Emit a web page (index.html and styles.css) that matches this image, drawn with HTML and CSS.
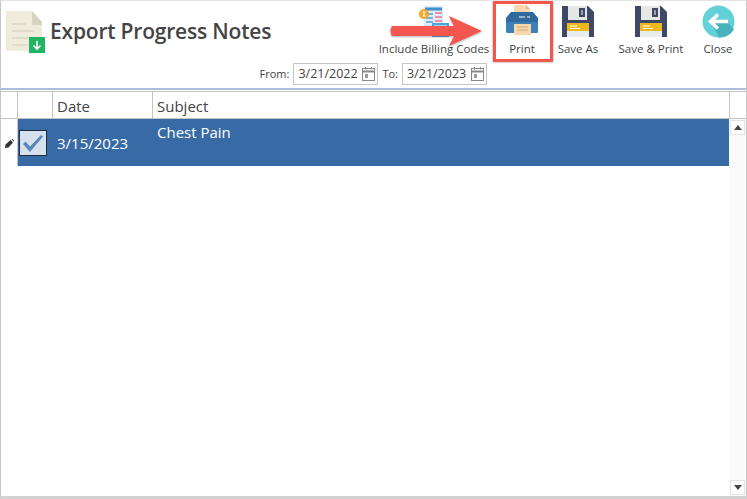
FILE: index.html
```html
<!DOCTYPE html>
<html>
<head>
    <title>Export Progress Notes</title>
    <link rel="stylesheet" href="styles.css">
</head>
<body>
    <div class="window">
        <div class="header">
            <div class="top-row">
                <div class="title-block">
                    <svg class="doc-icon" width="40" height="43" viewBox="0 0 40 43">
                        <path d="M0 0H26L36 11V40H0Z" fill="#efebdd"/>
                        <path d="M26 0L36 11V14H26Z" fill="#d8d3bf"/>
                        <path d="M6 13H20M6 20H28M6 27H28M6 34H22" stroke="#dcd7c3" stroke-width="1.5"/>
                        <rect x="23" y="26" width="16" height="16" fill="#22b365"/>
                        <path d="M31 30V38M27.5 34.5L31 38L34.5 34.5" fill="none" stroke="#fff" stroke-width="1.6"/>
                    </svg>
                    <h1>Export Progress Notes</h1>
                </div>
                <div class="tools">
                    <div class="tool tool-billing">
                        <svg width="30" height="33" viewBox="0 0 30 33">
                            <rect x="5" y="1" width="19" height="28" fill="#dcebf7"/>
                            <path d="M6 4H23" stroke="#3f8fd0" stroke-width="3"/>
                            <path d="M16 8H23M16 12H23M16 16H23" stroke="#ee8fa8" stroke-width="2"/>
                            <path d="M7 9H14M7 13H14M7 17H14" stroke="#6fb2e3" stroke-width="2"/>
                            <rect x="13" y="18" width="17" height="14" fill="#4ea3d8"/>
                            <rect x="15" y="20" width="13" height="3" fill="#a9d8ef"/>
                            <circle cx="5" cy="9" r="5" fill="#f5a623"/>
                            <path d="M3.500 7H6.500M3.500 11H6.500M5 6V12" stroke="#fff" stroke-width="1"/>
                        </svg>
                        <span>Include Billing Codes</span>
                    </div>
                    <div class="tool tool-print">
                        <svg width="34" height="33" viewBox="0 0 34 33">
                            <path d="M9 0H21L25 4V12H9Z" fill="#f6d7ae"/>
                            <path d="M21 0L25 4H21Z" fill="#e0bb8c"/>
                            <path d="M6 7H28L33 13V26Q33 28 31 28H3Q1 28 1 26V13Z" fill="#32699c"/>
                            <path d="M1 17H33V26Q33 28 31 28H3Q1 28 1 26Z" fill="#3c80b7"/>
                            <path d="M14 12H20M22 12H25" stroke="#fff" stroke-width="1"/>
                            <rect x="9" y="19" width="17" height="11" fill="#f6d7ae"/>
                            <path d="M12 22H23M12 25H23" stroke="#c9a878" stroke-width="1"/>
                        </svg>
                        <span>Print</span>
                    </div>
                    <div class="tool tool-save">
                        <svg width="32" height="33" viewBox="0 0 32 33">
                            <use href="#floppy"/>
                        </svg>
                        <span>Save As</span>
                    </div>
                    <div class="tool tool-saveprint">
                        <svg width="32" height="33" viewBox="0 0 32 33">
                            <defs>
                                <g id="floppy">
                                    <path d="M0 1H26L32 7V32H0Z" fill="#3f4866"/>
                                    <rect x="6" y="1" width="19" height="14" fill="#e6e8e6"/>
                                    <rect x="17" y="3" width="6" height="9" fill="#3f4866"/>
                                    <rect x="19" y="5" width="2" height="5" fill="#9aa0ad"/>
                                    <rect x="5" y="18" width="22" height="14" fill="#e8edec"/>
                                    <rect x="5" y="18" width="22" height="8" fill="#eeb91c"/>
                                    <path d="M8 21H15M8 23.500H18" stroke="#fff" stroke-width="1.200"/>
                                </g>
                            </defs>
                            <use href="#floppy"/>
                        </svg>
                        <span>Save &amp; Print</span>
                    </div>
                    <div class="tool tool-close">
                        <svg width="33" height="33" viewBox="0 0 33 33">
                            <circle cx="16.500" cy="16.500" r="16" fill="#64d0d8"/>
                            <path d="M9 17L25 17L32 24A16 16 0 0 1 17 32.500Z" fill="#49b3bd"/>
                            <path d="M26 16.500H10M16 9.500L8.500 16.500L16 23.500" fill="none" stroke="#fff" stroke-width="3.500"/>
                        </svg>
                        <span>Close</span>
                    </div>
                </div>
            </div>
            <div class="date-row">
                <label>From:</label>
                <div class="date-box">
                    <span>3/21/2022</span>
                    <svg class="cal" width="13" height="14" viewBox="0 0 13 14"><use href="#cal-icon"/></svg>
                </div>
                <label>To:</label>
                <div class="date-box">
                    <span>3/21/2023</span>
                    <svg class="cal" width="13" height="14" viewBox="0 0 13 14">
                        <defs>
                            <g id="cal-icon">
                                <rect x="0.500" y="1.500" width="12" height="12" fill="none" stroke="#888"/>
                                <path d="M0.500 4.500H12.500" stroke="#888" stroke-width="2"/>
                                <path d="M3.500 0V2.500M9.500 0V2.500" stroke="#888"/>
                                <rect x="3" y="7" width="3" height="4" fill="#999"/>
                            </g>
                        </defs>
                        <use href="#cal-icon"/>
                    </svg>
                </div>
            </div>
        </div>

        <div class="grid">
            <div class="grid-main">
                <div class="grid-head">
                    <div class="col-marker"></div>
                    <div class="col-check"></div>
                    <div class="col-date">Date</div>
                    <div class="col-subject">Subject</div>
                </div>
                <div class="grid-row">
                    <div class="col-marker">
                        <svg width="9" height="9" viewBox="0 0 9 9">
                            <path d="M0 9L0.500 5.500L5.500 1L8 3.500L3.500 8.500Z" fill="#333"/>
                            <path d="M6.500 0.500L7.500 0L9 1.500L8.500 2.500Z" fill="#333"/>
                        </svg>
                    </div>
                    <div class="row-cells">
                        <div class="col-check">
                            <div class="check-box">
                                <svg width="22" height="19" viewBox="0 0 22 19">
                                    <path d="M1 10L3.500 7.500L8 12.500L19 1L21 2.500L8 18Z" fill="#5a88bb"/>
                                </svg>
                            </div>
                        </div>
                        <div class="col-date">3/15/2023</div>
                        <div class="col-subject">Chest Pain</div>
                    </div>
                </div>
            </div>
            <div class="scrollbar">
                <div class="head-corner"></div>
                <div class="scroll-track">
                    <div class="scroll-btn"><span class="tri-up"></span></div>
                    <div class="scroll-btn"><span class="tri-down"></span></div>
                </div>
            </div>
        </div>

        <!-- annotations on top of the screenshot -->
        <div class="red-box"></div>
        <svg class="arrow" width="96" height="34" viewBox="0 0 96 34">
            <path d="M3 11H65L60 1L93 16L60 31L65 21H3Q0 16 3 11Z" fill="#f4574f"/>
        </svg>
    </div>
</body>
</html>
```

FILE: styles.css
```css
body {
    margin: 0;
    font-family: "Open Sans", "Noto Sans", sans-serif;
    font-size: 12px;
    color: #444;
    background: white;
}
.window {
    position: relative;
    box-sizing: border-box;
    width: 747px;
    height: 499px;
    display: flex;
    flex-direction: column;
    border-left: 1px solid #c8c8c8;
    border-right: 1px solid #c8c8c8;
    border-top: 1px solid #e4e4e4;
    border-bottom: 3px solid #d2d2d2;
    overflow: hidden;
}
.header {
    height: 87px;
    flex: none;
    display: flex;
    flex-direction: column;
    border-bottom: 2px solid #a9bfdc;
}
.top-row {
    height: 60px;
    display: flex;
    justify-content: space-between;
}
.title-block {
    display: flex;
    align-items: flex-start;
    padding-left: 5px;
}
.doc-icon {
    margin-top: 10px;
}
h1 {
    margin: 15px 0 0 4px;
    font-size: 21px;
    line-height: 30px;
    font-weight: 600;
    letter-spacing: -0.2px;
    color: #444;
}
.tools {
    display: flex;
}
.tool {
    display: flex;
    flex-direction: column;
    align-items: center;
    padding-top: 4px;
    white-space: nowrap;
}
.tool span {
    margin-top: 2px;
    line-height: 17px;
    font-size: 11.500px;
}
.tool-billing { width: 112px; }
.tool-print { width: 64px; }
.tool-save { width: 48px; }
.tool-saveprint { width: 98px; }
.tool-close { width: 36px; margin-right: 10px; }
.date-row {
    display: flex;
    align-items: center;
    justify-content: flex-end;
    padding-right: 259px;
    height: 25px;
    gap: 4px;
    font-size: 11px;
}
.date-box {
    box-sizing: border-box;
    width: 85px;
    height: 22px;
    display: flex;
    align-items: center;
    justify-content: space-between;
    padding: 0 2px 0 4px;
    border: 1px solid #c6c6c6;
    font-size: 12.500px;
}
.grid {
    flex: 1;
    display: flex;
    margin-top: 1px;
    border-top: 1px solid #c4c4c4;
}
.grid-main {
    flex: 1;
}
.grid-head {
    display: flex;
    height: 26px;
    border-bottom: 1px solid #c4c4c4;
    font-size: 15px;
    line-height: 29px;
}
.grid-head .col-marker,
.grid-head .col-check,
.grid-head .col-date {
    border-right: 1px solid #c4c4c4;
}
.col-marker {
    box-sizing: border-box;
    width: 17px;
    flex: none;
}
.col-check {
    box-sizing: border-box;
    width: 35px;
    flex: none;
}
.col-date {
    box-sizing: border-box;
    width: 100px;
    flex: none;
    padding-left: 4px;
}
.col-subject {
    flex: 1;
    padding-left: 4px;
}
.grid-row {
    display: flex;
    height: 47px;
}
.grid-row .col-marker {
    display: flex;
    align-items: center;
    justify-content: center;
    padding-top: 2px;
    border-right: 1px solid #c4c4c4;
}
.row-cells {
    flex: 1;
    display: flex;
    background: #386ba6;
    color: white;
    font-size: 15px;
}
.row-cells .col-check {
    display: flex;
    align-items: center;
    padding-left: 1px;
    padding-top: 1px;
}
.row-cells .col-date {
    line-height: 48px;
}
.row-cells .col-subject {
    line-height: 26px;
}
.check-box {
    box-sizing: border-box;
    width: 28px;
    height: 26px;
    display: flex;
    align-items: center;
    justify-content: center;
    background: #d7e1ee;
    border: 1px solid #1c2c40;
}
.scrollbar {
    width: 17px;
    flex: none;
    display: flex;
    flex-direction: column;
}
.head-corner {
    height: 26px;
    flex: none;
    border-left: 1px solid #c4c4c4;
    border-bottom: 1px solid #c4c4c4;
}
.scroll-track {
    flex: 1;
    display: flex;
    flex-direction: column;
    justify-content: space-between;
    background: #fafafa;
    padding: 1px;
}
.scroll-btn {
    box-sizing: border-box;
    height: 15px;
    display: flex;
    align-items: center;
    justify-content: center;
    border: 1px solid #e4e4e4;
    background: white;
}
.tri-up {
    border-left: 4px solid transparent;
    border-right: 4px solid transparent;
    border-bottom: 5px solid #444;
}
.tri-down {
    border-left: 4px solid transparent;
    border-right: 4px solid transparent;
    border-top: 5px solid #444;
}
.red-box {
    position: absolute;
    left: 492px;
    top: 0;
    width: 54px;
    height: 55px;
    border: 3px solid #f0574f;
    box-shadow: 0 0 2px rgba(0,0,0,0.45);
}
.arrow {
    position: absolute;
    left: 388px;
    top: 14px;
    filter: drop-shadow(0 1px 1px rgba(0,0,0,0.3));
}
```
